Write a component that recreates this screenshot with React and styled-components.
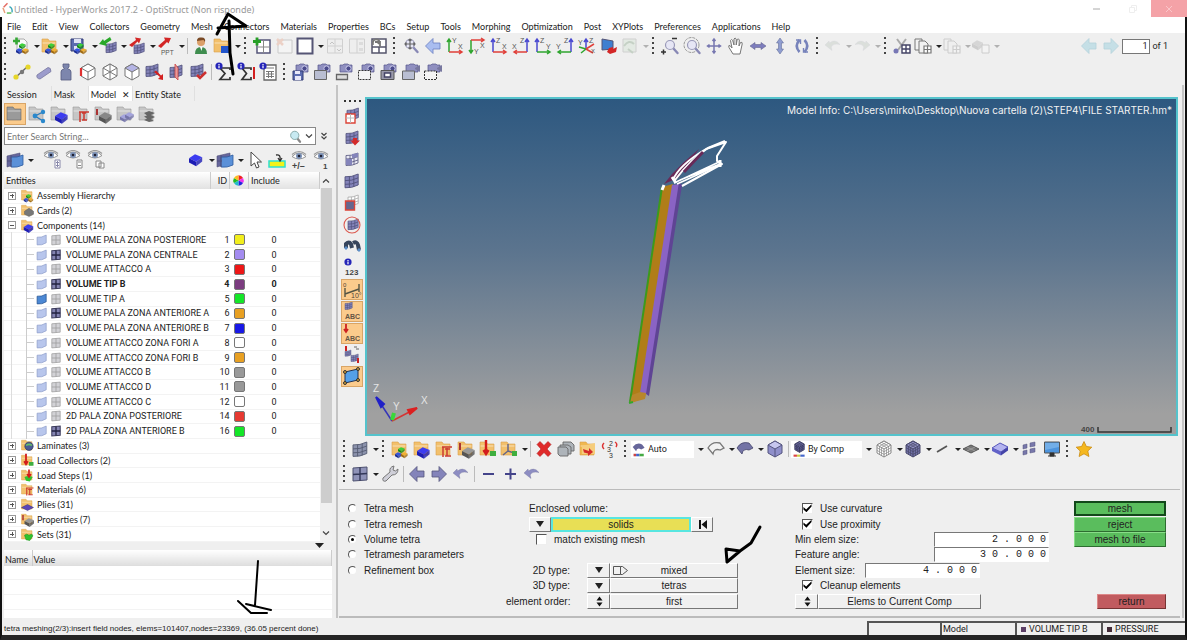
import React, { useState } from 'react';
import styled, { createGlobalStyle } from 'styled-components';

const GlobalStyle = createGlobalStyle`
	* { box-sizing : border-box; }
	body {
		margin : 0;
		background : #efefef;
		color : #222;
		font-family : Roboto, "Liberation Sans", sans-serif;
		font-size : 9px;
	}
	button, input, select {
		font : inherit;
		color : inherit;
		margin : 0;
		padding : 0;
		border : 0;
		border-radius : 0;
		background : none;
	}
`

/* ---------- drawing pieces ---------- */

const P = '#8484ba';
const D = '#50507a';

const Folder = ({ fill = '#f2c06c', edge = '#d9a04a' }) => (
	<g>
		<path d="M2 3h6l1.5 2H16v11H2z" fill={fill} stroke={edge} strokeWidth=".6" />
		<path d="M2.5 7h13" stroke="#fff" strokeOpacity=".5" />
	</g>
);

const Block = ({ x = 0, y = 0, s = 1, c = '#3c3cf0', side = '#1c1cb4' }) => (
	<g transform={`translate(${x} ${y}) scale(${s})`}>
		<path d="M0 3.5l5-3.2 6 2.4-5 3.8z" fill={c} />
		<path d="M0 3.5l6 3v3.8l-6-3.3z" fill={side} />
		<path d="M6 6.5l5-3.8v3.6l-5 4z" fill={side} fillOpacity=".8" />
	</g>
);

const Cubes = ({ x = 6, y = 8 }) => (
	<g>
		<Block x={x + 2} y={y - 1} s={.6} c="#3ad13a" side="#168a16" />
		<Block x={x - 1} y={y + 4} s={.6} c="#3355e0" side="#1a2d96" />
		<Block x={x + 5} y={y + 4} s={.6} c="#f0b030" side="#a06a10" />
	</g>
);

const Mesh = ({ x = 3, y = 3, s = 1, c = P, line = D }) => (
	<g transform={`translate(${x} ${y}) scale(${s})`}>
		<path d="M0 2.5Q6 3 12 0v10Q6 13 0 12.5z" fill={c} stroke={line} strokeWidth=".8" />
		<path d="M0 6Q6 6.4 12 3.5M0 9.4Q6 9.8 12 7M4 2.4v10.1M8 1.7v10" fill="none" stroke={line} strokeWidth=".8" />
	</g>
);

const IsoCube = ({ fill = '#fff', top = '#fff', line = '#777', grid }) => (
	<g stroke={line} strokeWidth="1" strokeLinejoin="round">
		<path d="M3 6l7-4 7 4v8l-7 4-7-4z" fill={fill} />
		<path d="M3 6l7-4 7 4-7 4z" fill={top} />
		<path d="M10 10v8" />
		{grid && <path d="M5.500 4.500l7 4v8M7.500 3.300l7 4v8M14.500 4.500l-7 4v8M12.500 3.300l-7 4v8M3 8.700l7 4 7-4M3 11.400l7 4 7-4" fill="none" strokeWidth=".7" />}
	</g>
);

const Camera = ({ video, children }) => (
	<g>
		<path d="M5 3h3l1-1h4l1 1h3v7H5z" fill="#8f8fc0" stroke="#55558a" strokeWidth=".7" />
		{video ? <path d="M14 6l5-3v7l-5-3z" fill="#77779f" /> : <circle cx="13.500" cy="6.500" r="2.600" fill="#4b4b8c" stroke="#c9c9ea" />}
		{children}
	</g>
);

const Eye = ({ x = 0, y = 0 }) => (
	<g transform={`translate(${x} ${y})`}>
		<path d="M1 5.500Q8 -1.500 15 5.500Q8 10.500 1 5.500z" fill="#fff" stroke="#888" strokeWidth=".9" />
		<path d="M1 3.500Q8 -2.500 15 3.500" fill="none" stroke="#999" strokeWidth="1.200" />
		<circle cx="8" cy="5" r="3" fill="#7d93b8" />
		<circle cx="8" cy="5" r="1.300" fill="#223" />
	</g>
);

const Lens = ({ x = 11, y = 9 }) => (
	<g>
		<path d={`M${x + 3} ${y + 3}l4.500 5`} stroke="#8888b5" strokeWidth="2.400" strokeLinecap="round" />
		<circle cx={x} cy={y} r="4.500" fill="#e6e6f5" stroke="#9a9ab8" strokeWidth="1.200" />
	</g>
);

const Axes = ({ a, b, ca, cb, flip, down }) => {
	const x = flip ? 16 : 4;
	const e = flip ? 3 : 17;
	const y = down ? 4 : 16;
	const t = down ? 17 : 3;
	const k = down ? -3 : 3;
	const m = flip ? 3 : -3;
	return (
		<g>
			<path d={`M${x} ${y}V${t}M${x - 2} ${t + k}L${x} ${t}l2 ${k}`} fill="none" stroke={ca} strokeWidth="1.500" />
			<path d={`M${x} ${y}H${e}M${e + m} ${y - 2}L${e} ${y}l${m} 2`} fill="none" stroke={cb} strokeWidth="1.500" />
			<text x={flip ? 9 : 7} y={down ? 18 : 7} fontSize="7" fill="#555">{a}</text>
			<text x={flip ? 1 : 13} y={down ? 12 : 13} fontSize="7" fill="#555">{b}</text>
		</g>
	);
};

const Info = ({ x = 5, y = 4 }) => (
	<g>
		<circle cx={x} cy={y} r="3.600" fill="#2525b8" />
		<path d={`M${x} ${y - 2}v1M${x} ${y - .4}v2.600`} stroke="#fff" strokeWidth="1.200" />
	</g>
);

const Curl = ({ c = '#8d8dc2', flip }) => (
	<path transform={flip ? 'matrix(-1 0 0 1 20 0)' : undefined} d="M2 9l7 5.500-.8-3.500Q10 7 17 8.500Q12 2.500 6.500 7L6 5z" fill={c} stroke="#66668e" strokeOpacity=".5" strokeWidth=".6" />
);

const Arrow = ({ left, c = P, line = '#55557c' }) => (
	<path transform={left ? 'matrix(-1 0 0 1 20 0)' : undefined} d="M3 7h7V2.500l7.500 7.500-7.500 7.500V13H3z" fill={c} stroke={line} strokeWidth=".8" />
);

const Pages = ({ c = '#777' }) => (
	<g fill="#f2f2f2" stroke={c}>
		<path d="M2 3h7v11H2z" />
		<path d="M6 5h6l3 3v9H6z" />
		<path d="M11 10h7v7h-7zM14.500 10v7M11 13.500h7" fill="#fff" stroke={c} strokeWidth="1.200" />
	</g>
);

const icons = {
	fresh: <g><path d="M6 3h7l3 3v10H6z" fill="#fafafa" stroke="#aaa" /><path d="M2 5h7M5.500 1.500v7" stroke="#36a836" strokeWidth="2.600" /><Cubes /></g>,
	open: <g><Folder /><Cubes /></g>,
	save: <g><path d="M2 3h12v12H2z" fill="#5c6cb0" stroke="#333d77" /><path d="M5 3h7v4H5zM5 10h6v5H5z" fill="#dfe3f5" /><Cubes /></g>,
	bring: <g><Mesh x={8} y={6} s={.85} /><path d="M1 8l4-5 1 2 6-4 1.500 3L8 7.500l1 2.500z" fill="#28a828" /></g>,
	send: <g><Mesh x={7} y={7} s={.85} /><path d="M2 9l7-5-1-2.500 6 1-2 5-1.500-2L5 11z" fill="#d32626" /></g>,
	ppt: <g><path d="M2 10l7-6-1-2.500 7 .5-2.500 5.500L11 6l-6 6z" fill="#d32626" /><text x="5" y="19" fontSize="6.500" fill="#555">PPT</text></g>,
	user: <g><circle cx="10" cy="6" r="4" fill="#dba06a" /><path d="M6 5Q6 1 10 1.500Q15 1 14 6L12.500 4Q9 4.500 6 5z" fill="#7a4a26" /><path d="M4 18Q4 11 10 11T16 18z" fill="#3f8d4f" /><path d="M9 11l1.500 4 1-4z" fill="#fff" /></g>,
	profile: <g><Folder /><path d="M9 10h8v7H9z" fill="#2255cc" /></g>,
	pageAdd: <g><path d="M5 4h13v13H5z" fill="#fff" stroke="#55557a" strokeWidth="1.500" /><path d="M11.500 4v13M5 11h13" stroke="#888" /><path d="M1 5.500h8M5 1.500v8" stroke="#279f27" strokeWidth="2.800" /></g>,
	pageDel: <g opacity=".35"><path d="M4 4h14v13H4z" fill="#fff" stroke="#888" /><path d="M3 3l6 6M9 3L3 9" stroke="#e79a7c" strokeWidth="2.500" /></g>,
	frame: <path d="M2.500 2.500h15v15h-15z" fill="#fff" stroke="#555575" strokeWidth="2" />,
	frameA: <g opacity=".35"><path d="M2.500 3h15v14h-15zM10 3v14M3 10h14" fill="#eee" stroke="#999" /><path d="M5 8l2-2 2 2M12 13l2 2 2-2" fill="none" stroke="#777" /></g>,
	frameB: <g opacity=".35"><path d="M2.500 3h15v14h-15zM10 3v14" fill="#eee" stroke="#999" /><path d="M12 6h4v3h-4zM12 12h4v3h-4z" fill="#bbb" /></g>,
	turn: <g><path d="M3 3h14v14H3zM3 11h14M10 11v6" fill="#fff" stroke="#55556c" strokeWidth="1.500" /><path d="M4 9Q3 3 8 3.500Q12 4 9 8M6 6h5v5" fill="none" stroke="#777" strokeWidth="1.800" /></g>,
	fit: <g><Lens x={9} y={8} /><path d="M4 8h10M9 3v10M7.500 4.500L9 3l1.500 1.500M7.500 11.500L9 13l1.500-1.500M5.500 6.500L4 8l1.500 1.500M12.500 6.500L14 8l-1.500 1.500" fill="none" stroke="#666" strokeWidth="1.200" /></g>,
	back: <Arrow left c="#a9bdf0" line="#6b7fc0" />,
	xy: <Axes a="Y" b="X" ca="#2fa52f" cb="#e0403a" />,
	yx: <Axes a="Y" b="X" ca="#2fa52f" cb="#e0403a" down />,
	zx: <Axes a="Z" b="X" ca="#4a4ad0" cb="#e0403a" />,
	xz: <Axes a="Z" b="X" ca="#4a4ad0" cb="#e0403a" flip />,
	zy: <Axes a="Z" b="Y" ca="#4a4ad0" cb="#2fa52f" />,
	yz: <Axes a="Z" b="Y" ca="#4a4ad0" cb="#2fa52f" flip />,
	iso: <g fill="none" strokeWidth="1.500"><path d="M9 13V3M7 6l2-3 2 3" stroke="#4a4ad0" /><path d="M9 13l-7-2M9 13l-5 4" stroke="#2fa52f" /><path d="M9 13l8-5M9 13l7 4" stroke="#e0403a" /><text x="1" y="9" fontSize="7" fill="#555">Y</text><text x="12" y="7" fontSize="7" fill="#555">Z</text><text x="14" y="17" fontSize="6" fill="#555">X</text></g>,
	views: <g><path d="M3 3l11 2v8L3 14z" fill="#3f7fd0" stroke="#557" /><path d="M10 12l4-1v2l4-2-1 5-6 2-3-2z" fill="#d32626" /></g>,
	ghost: <g opacity=".35"><path d="M3 3h13v13H3z" fill="#cfe2cf" stroke="#999" /><path d="M4 10Q9 3 14 8M8 13l5 4" fill="none" stroke="#7a9c7a" strokeWidth="2" /></g>,
	zoomBox: <g><Lens x={10} y={9} /><path d="M12 2.500h5M1 16h5M3.500 13.500v5" stroke="#333" strokeWidth="1.500" /></g>,
	zoomRing: <g><circle cx="9.500" cy="9" r="7.500" fill="none" stroke="#999" strokeDasharray="3 1" /><Lens x={10} y={9} /></g>,
	pan: <path d="M10 3v14M3.500 10h13M8.500 5L10 3l1.500 2M8.500 15l1.500 2 1.500-2M5.500 8.500l-2 1.500 2 1.500M14.500 8.500l2 1.500-2 1.500" fill="none" stroke="#7777b0" strokeWidth="1.500" />,
	hand: <path d="M7 18L3 11.500Q2 9 4 9.500L6 12 4.500 4.500Q5.500 2.500 6.700 4.500L8 9V3Q9 1 10.200 3v6l1-5.500Q12.500 2 13.300 4L13 10l1.500-3.500Q16.500 5.500 16.200 8L14 18z" fill="#fff" stroke="#777" strokeWidth="1" />,
	horiz: <path d="M2 10l5-3.500v2h6v-2l5 3.500-5 3.500v-2H7v2z" fill="#7d7dbd" stroke="#666690" strokeWidth=".6" />,
	vert: <path d="M10 2l3.500 5h-2v6h2L10 18l-3.500-5h2V7h-2z" fill="#8f9dd0" stroke="#66709c" strokeWidth=".6" />,
	spin: <g fill="none" stroke="#7783bb" strokeWidth="2.600"><path d="M7.500 4Q2 10 7.500 16M12.500 4Q18 10 12.500 16" /><path d="M4 4h4.500v4M16 16h-4.500v-4" strokeWidth="1.400" /></g>,
	undoOff: <g opacity=".22"><Curl c="#9a9" /></g>,
	redoOff: <g opacity=".22"><Curl c="#9a9" flip /></g>,
	cut: <g><path d="M5 3l8 11M14 3L6 14" stroke="#aaa" strokeWidth="2" /><circle cx="4" cy="15" r="2.500" fill="#7777b5" /><path d="M10 9h8v8h-8zM14 9v8M10 13h8" fill="#fff" stroke="#444466" strokeWidth="1.400" /></g>,
	copy: <Pages />,
	paste: <g opacity=".28"><Pages /></g>,
	wipe: <g opacity=".28"><Block x={1} y={4} c="#999" side="#777" /><path d="M11 9h7v8h-7z" fill="#fff" stroke="#777" /></g>,
	prev: <Arrow left c="#c5dfe6" line="#b4d2da" />,
	next: <Arrow c="#c5dfe6" line="#b4d2da" />,

	nodes: <g><path d="M4 15L15 5" stroke="#666" strokeWidth="1.400" /><circle cx="4" cy="15" r="2.600" fill="#e6d62a" /><circle cx="10" cy="10" r="2.200" fill="#777" /><circle cx="16" cy="5" r="2.600" fill="#e6d62a" /></g>,
	rod: <path d="M3 13L14 5.500q3 0 3 4L6 17q-4-.5-3-4z" fill="#9c9ccc" stroke="#7777a0" strokeWidth=".8" />,
	mass: <path d="M7 2h6v3l-1.500 1.500Q15.500 8 15 10v8H5v-8Q4.500 8 8.500 6.500L7 5z" fill="#7d86ad" stroke="#555c80" strokeWidth=".8" />,
	cubeRed: <g><IsoCube /><path d="M3 6v8" stroke="#e03030" strokeWidth="2.200" /></g>,
	cubeX: <g fill="none"><IsoCube /><path d="M3 14l7-4 7 4M10 2v8" stroke="#777" /></g>,
	cubeTop: <IsoCube top="#b4b4e4" />,
	meshOut: <g><Mesh x={2} y={2} /><path d="M10 10l6 5-2 2 5 1V12l-2 1.500-5-5z" fill="#d32020" /></g>,
	meshFlip: <g><Mesh x={4} y={3} /><path d="M9 2l3 4v12l-3-3z" fill="#e89a9a" stroke="#c44" strokeWidth=".8" /></g>,
	meshOk: <g><Mesh x={3} y={2} /><path d="M9 13l3 3 6-6" fill="none" stroke="#cc3030" strokeWidth="2.500" /></g>,
	sum: <g><path d="M15 8V6H5l5 5.500-5 6h10v-2.500" fill="none" stroke="#333" strokeWidth="1.700" /><Info x={4} /></g>,
	sumLoad: <g><path d="M14 8V6H5l4.500 5.500-4.500 6h9v-2.500" fill="none" stroke="#333" strokeWidth="1.700" /><Info x={4} /><path d="M17 5v12" stroke="#d32020" strokeWidth="2" /></g>,
	calc: <g><path d="M5 3h12v15H5z" fill="#fff" stroke="#666" strokeWidth="1.300" /><path d="M7 6h8M7 9.500h8M7 12h8M7 14.500h8M9.500 9v7M12.500 9v7" stroke="#777" /><Info x={4} /></g>,
	camSave: <Camera><path d="M2 9h10v9H2z" fill="#5c6cb0" stroke="#333d77" /><path d="M4 9h5v3H4zM4 14h6v4H4z" fill="#e8e8f8" /></Camera>,
	camWin: <Camera><path d="M1.500 8.500h12v9h-12z" fill="#b9bed2" stroke="#666" /></Camera>,
	camBar: <Camera><path d="M1.500 12.500h11v5h-11z" fill="#ddd" stroke="#666" strokeWidth="1.300" /></Camera>,
	camDash: <Camera><path d="M1.500 8.500h12v9h-12z" fill="#f4f4f4" stroke="#333" strokeDasharray="2 1" /></Camera>,
	camFrame: <Camera><path d="M2 8.500h13v9H2z" fill="#99a" stroke="#555" /><path d="M5.500 11h6v4h-6z" fill="#fff" stroke="#446" strokeWidth="1.500" /></Camera>,
	vidWin: <Camera video><path d="M1.500 9h12v8.500h-12z" fill="#b9bed2" stroke="#666" /></Camera>,
	vidDash: <Camera video><path d="M1.500 9h12v8.500h-12z" fill="#f4f4f4" stroke="#333" strokeDasharray="2 1" /></Camera>,

	fGrey: <Folder fill="#9a9a9a" edge="#666" />,
	fLink: <g><Folder fill="#c6c6c6" edge="#999" /><path d="M8 12l8-4M8 12l8 5" stroke="#2a78b8" strokeWidth="1.300" /><circle cx="8" cy="12" r="2.400" fill="#2a88cc" /><circle cx="16" cy="8" r="2.200" fill="#2a88cc" /><circle cx="16" cy="17" r="2.200" fill="#2a88cc" /></g>,
	fBlue: <g><Folder fill="#c6c6c6" edge="#999" /><Block x={6} y={8} s={1.150} /></g>,
	fMat: <g><Folder fill="#c6c6c6" edge="#999" /><path d="M8 8h10M9 8v10M13 9v7M11 9h4M11 16h5" stroke="#cc3a30" strokeWidth="1.500" /></g>,
	fProp: <g><Folder fill="#c6c6c6" edge="#999" /><Block x={6} y={8} s={1.150} c="#888" side="#555" /><path d="M4 5v6" stroke="#a33" strokeWidth="2" /></g>,
	fRefs: <g><Folder fill="#c6c6c6" edge="#999" /><Block x={5} y={10} s={.8} c="#a4a4dd" side="#7474aa" /><Block x={10} y={8} s={.8} c="#a4a4dd" side="#7474aa" /></g>,
	fStack: <g><Folder fill="#c6c6c6" edge="#999" /><path d="M7 9l5-2 6 2-4 2 4 2-4 2 3 2-5 1-5-2 3-1.500-3-2 3-1z" fill="#666" /></g>,
	patch: <g><path d="M2 6l13-3v10L2 17z" fill="#66669c" stroke={D} strokeWidth=".6" /><path d="M6 7q6 1 12-2v10q-6 3-12 2z" fill="#5a90d8" stroke="#2d5c9f" strokeWidth=".8" /><path d="M2 11h5M6 5v12" stroke={D} /></g>,
	eyePlus: <g><Eye /><path d="M12 10h5v8h-5zM14.500 11v6M13 12.500h3M13 15.500h3" fill="#fff" stroke="#88a" /></g>,
	eyeMinus: <g><Eye /><path d="M12 10h5v8h-5zM13 12h3M13 15.500h3" fill="#fff" stroke="#888" /></g>,
	eyeFlip: <g><Eye /><path d="M9 11h5v6H9zM12 13h5v5h-5z" fill="#fff" stroke="#888" /></g>,
	block: <Block x={3} y={4} s={1.200} />,
	cursor: <path d="M6 2v14l3.500-3 2 5 2.500-1-2-5h4.500z" fill="#fff" stroke="#444" />,
	addTo: <g><path d="M2 11h16v6H2z" fill="#f2f21a" stroke="#2ee0d0" strokeWidth="1.500" /><path d="M9 5q5-1 4 5M11 8l2 3 2-3" fill="none" stroke="#333" strokeWidth="1.300" /></g>,
	eyeAll: <g><Eye x={2} y={1} /><text x="3" y="19" fontSize="9" fontWeight="700" fill="#444">+/–</text></g>,
	eyeOne: <g><Eye x={2} y={1} /><text x="12" y="19" fontSize="8" fontWeight="700" fill="#444">1</text></g>,

	vMask: <g><Mesh x={5} y={2} s={.95} /><path d="M4 8h9v9H4z" fill="#fff" stroke="#dc4438" strokeWidth="1.400" /><path d="M4 12h9M8.500 8v9" stroke="#bbb" /></g>,
	vDown: <g><Mesh x={4} y={3} /><path d="M11 10h4v2.500h3L13 17.500 8.500 12.500H11z" fill="#d42a2a" /></g>,
	vHalf: <g><Mesh x={4} y={3} c="#e8e8f4" /><path d="M4 9h6v6H4zM10 4l6-1v4l-6 1z" fill={P} /></g>,
	vFull: <Mesh x={3} y={3} s={1.100} />,
	vWire: <g><Mesh x={6} y={2} s={.85} c="#fff" line="#999" /><path d="M3.500 8h9v9h-9z" fill="#66668e" stroke="#dc4438" strokeWidth="1.400" /></g>,
	vCircle: <g><Mesh x={6} y={4} s={.85} /><circle cx="10" cy="10" r="8" fill="none" stroke="#dc5a50" strokeWidth="1.100" /></g>,
	find: <g fill="none" stroke="#36455c" strokeWidth="4"><path d="M4 12V8q3-3 5 0l1 4" /><path d="M11 7q4-2 5 2l1 5" /><circle cx="4" cy="12" r="1.200" fill="#5c8fc8" stroke="#5c8fc8" strokeWidth="1" /><circle cx="17" cy="14" r="1.200" fill="#5c8fc8" stroke="#5c8fc8" strokeWidth="1" /></g>,
	numbers: <g><Info x={6} y={4} /><text x="3" y="17" fontSize="8" fontWeight="700" fill="#444">123</text></g>,
	measure: <g stroke="#554"><path d="M3 8v9M3 14l14-5M17 4v8" fill="none" strokeWidth="1.400" /><text x="1" y="7" fontSize="6" stroke="none" fill="#543">0</text><text x="9" y="18" fontSize="7" stroke="none" fill="#543">10°</text></g>,
	meshAbc: <g><Mesh x={3} y={1} s={.6} /><text x="3" y="18" fontSize="7" fontWeight="700" fill="#654">ABC</text></g>,
	loadAbc: <g><path d="M4 1v8M2 6l2 3 2-3" stroke="#c22" strokeWidth="1.800" fill="none" /><text x="3" y="18" fontSize="7" fontWeight="700" fill="#654">ABC</text></g>,
	loads: <g><Mesh x={3} y={5} s={.5} /><Mesh x={9} y={9} s={.6} /><path d="M4 1v5M16 13v5" stroke="#c22" strokeWidth="2" /><path d="M12 2h3M14 4h3" stroke="#666" /></g>,
	shade: <g><path d="M3 6l13-3v11L3 17z" fill="#55a0e8" stroke="#235" strokeWidth="1" /><circle cx="3" cy="6" r="1.500" fill="#c93" stroke="#333" /><circle cx="16" cy="3" r="1.500" fill="#c93" stroke="#333" /><circle cx="16" cy="14" r="1.500" fill="#c93" stroke="#333" /><circle cx="3" cy="17" r="1.500" fill="#c93" stroke="#333" /></g>,

	gMesh: <Mesh x={3} y={3} s={1.150} c="#8c93ad" line="#555b72" />,
	yCubes: <g><Folder /><Cubes y={9} /></g>,
	yBlue: <g><Folder /><Block x={5} y={8} s={1.150} /></g>,
	yMat: <g><Folder /><path d="M8 8h10M9 8v10M13 9v8M11 10h5M11 17h6" stroke="#cc3a30" strokeWidth="1.500" /></g>,
	yProp: <g><Folder /><Block x={6} y={8} s={1.150} c="#999" side="#555" /><path d="M4 4v7" stroke="#a33" strokeWidth="2" /></g>,
	yLoad: <g><Folder /><path d="M8 1v14M5.500 11L8 15l2.500-4" stroke="#d31c1c" strokeWidth="2.400" fill="none" /><path d="M12 12h6v5h-6z" fill="#3fae3f" /></g>,
	ySys: <g><Folder /><path d="M9 5v7M9 12l-5 4M9 12l6 2" stroke="#668" strokeWidth="1.500" /><path d="M13 12h5v5h-5z" fill="#3fae3f" /></g>,
	yGreen: <g><Folder /><path d="M6 11q3-3 6 0 5-3 5 1l-4 6-5-1z" fill="#2fc32f" stroke="#189018" strokeWidth=".7" /></g>,
	yStep: <g><Folder /><path d="M6 12q5-3 11 0l-4 6-5-1z" fill="#2fc32f" /><path d="M12 2v10M9.500 8l2.500 4 2.500-4" stroke="#d31c1c" strokeWidth="2.200" fill="none" /></g>,
	yPly: <g><Folder /><path d="M2 14l8-4 8 4-8 4z" fill="#5b46b8" stroke="#333077" strokeWidth=".6" /></g>,
	yBall: <g><Folder /><circle cx="12" cy="11" r="5.500" fill="#4a5a94" stroke="#2c365e" /><path d="M8 10q4-3 8 0" stroke="#68c068" strokeWidth="2" fill="none" /></g>,
	yCard: <g><Folder /><path d="M6 11l6-4 6 4v4l-6 3-6-3z" fill="#777" stroke="#555" strokeWidth=".6" /></g>,
	remove: <path d="M3 5.500l3-3 4 4 4-4 3 3-4 4.500 4 4.500-3 3-4-4-4 4-3-3L7 10z" fill="#e02a2a" stroke="#b01818" strokeWidth=".6" />,
	stack: <g fill="#aeb4ba" stroke="#666" strokeWidth=".9"><path d="M7 3h8l3 3v6H7z" /><path d="M4 6h8l3 2v7H4z" /><path d="M2 8h8l2 2v7H4l-2-2z" /></g>,
	organize: <g><Folder fill="#f0b850" /><path d="M17 4v11H4V7z" fill="#f6cd7c" /><path d="M5 10l6 2V9l4 4-5 4v-2.500l-4-1z" fill="#d42a2a" /></g>,
	renum: <g fontSize="7" fill="#333"><text x="9" y="7">2</text><text x="7" y="13">3</text><text x="9" y="19">3</text><path d="M4 4q-3 3 0 6M15 3q3 2 1 5" fill="none" stroke="#d33" strokeWidth="1.500" /></g>,
	surf: <path d="M2 9Q6 2 14 4L18 9l-4 2Q8 9 7 15z" fill="#7474a6" stroke="#44446a" strokeWidth=".8" />,
	surfLine: <path d="M2 9Q6 2 14 4L18 9l-4 2Q8 9 7 15z" fill="#f2f2f2" stroke="#777" strokeWidth="1.300" />,
	solid: <IsoCube fill="#8f8fca" top="#c6c6ee" line="#55557f" />,
	wireCube: <IsoCube grid line="#888" />,
	fillCube: <IsoCube grid fill="#7272a8" top="#9090c4" line="#4a4a6c" />,
	line: <path d="M5 13l10-6" stroke="#555" strokeWidth="1.800" />,
	shell: <g><path d="M2 10l8-4 8 4-8 4z" fill="#777" stroke="#555" /><path d="M6 8l8 4M14 8l-8 4" stroke="#aaa" strokeWidth=".7" /></g>,
	slab: <g><path d="M2 9l8-5 8 4-7 5z" fill="#b4b4f0" stroke="#5555bb" /><path d="M2 9l9 4v3.500L2 12z" fill="#6262c8" /><path d="M11 13l7-5v3.500l-7 5z" fill="#4444a8" /></g>,
	shrink: <g fill="#7777aa" stroke="#55557f" strokeWidth=".5"><path d="M3 6l4-1v4l-4 1zM10 4l5-1v4l-5 1zM3 12l4-1v4l-4 1zM10 10l5-1v4l-5 1z" /></g>,
	screen: <g><path d="M2.500 3h15v11h-15z" fill="#4d94dd" stroke="#555" /><path d="M3 4h14v4L3 11z" fill="#8cc0f0" fillOpacity=".6" /><path d="M8 14h4v3H8zM6 17h8" fill="#333" stroke="#333" /></g>,
	star: <path d="M10 2.500l2.400 5 5.400.7-4 3.800 1.100 5.500L10 14.800l-4.900 2.700L6.200 12l-4-3.800 5.400-.7z" fill="#f5b81f" stroke="#c98a10" strokeWidth=".8" />,
	meshFour: <g><path d="M3 4l14-1v13L3 17z" fill="#8f93b8" stroke="#4c506f" /><path d="M10 3.500v13M3 10.500l14-1" stroke="#333858" strokeWidth="1.400" /></g>,
	wrench: <path d="M3 14l7-6Q9 3 14 2l-1 4 2.500 1L18 5q0 6-6 6l-6 6q-4 1-3-3z" fill="#cfcfd8" stroke="#777" strokeWidth="1" />,
	left: <Arrow left />,
	right: <Arrow />,
	curl: <Curl />,
	minus: <path d="M5 10h11" stroke="#44448a" strokeWidth="2" />,
	plus: <path d="M5 10h11M10.500 4.500v11" stroke="#44448a" strokeWidth="2" />,
	palette: <g><path d="M2 7Q7 1 13 4l3 4-4 2Q7 7 6 12z" fill="#66669a" /><path d="M3 15h3v3H3z" fill="#c44" /><path d="M6 15h4v3H6z" fill="#46c" /><path d="M10 15h5v3h-5z" fill="#4a4" /></g>,
	compCube: <g><g transform="translate(2 -1) scale(.8)"><IsoCube grid fill="#66669c" top="#7a7ab0" line="#2f2f50" /></g><path d="M3 16h4v2.500H3z" fill="#d44" /><path d="M7 16h4v2.500H7z" fill="#cc4" /><path d="M11 16h5v2.500h-5z" fill="#46c" /></g>,
	lens: <g><path d="M12 12l4 5" stroke="#888" strokeWidth="3" strokeLinecap="round" /><circle cx="9" cy="8.500" r="5.500" fill="#c8eaf2" stroke="#8aa" strokeWidth="1.300" /></g>,
	wheel: <g><path d="M10 10V2a8 8 0 0 1 7 4z" fill="#e22" /><path d="M10 10l7-4a8 8 0 0 1 0 8z" fill="#e3e" /><path d="M10 10l7 4a8 8 0 0 1-7 4z" fill="#22d" /><path d="M10 10v8a8 8 0 0 1-7-4z" fill="#2bc" /><path d="M10 10l-7 4a8 8 0 0 1 0-8z" fill="#2b2" /><path d="M10 10L3 6a8 8 0 0 1 7-4z" fill="#fb2" /></g>,
	geoOff: <path d="M3 6q6 1 13-3v11q-6 4-13 3z" fill="#b8c6ec" stroke="#8c9cc9" />,
	geoOn: <path d="M3 6q6 1 13-3v11q-6 4-13 3z" fill="#4c88d4" stroke="#24508c" />,
	elOff: <g><path d="M4 4l12-1v13l-12 1z" fill="#d2d2d6" stroke="#999" /><path d="M10 3.500v13M4 10h12" stroke="#999" /></g>,
	elOn: <g><path d="M4 4l12-1v13l-12 1z" fill="#8484b2" stroke="#3c3c5c" strokeWidth="1.500" /><path d="M10 3.500v13M4 10h12" stroke="#222240" strokeWidth="1.800" /></g>,
	logo: <g fill="none" strokeWidth="2.200"><path d="M10 2L4 8" stroke="#e46a62" /><path d="M3 9l3 8" stroke="#e9a07c" /><path d="M13 7q5 2 4 9" stroke="#3aa6b8" /><path d="M9 17h7" stroke="#58b858" /></g>,
};

const Svg = styled.svg`
	display : block;
	flex : none;
	width : ${p => p.$size || 20}px;
	height : ${p => p.$size || 20}px;
	font-family : "Liberation Sans", sans-serif;
`

const Icon = ({ name, size }) => <Svg viewBox="0 0 20 20" $size={size} aria-hidden="true">{icons[name]}</Svg>;

/* ---------- frame ---------- */

const Page = styled.div`
	position : relative;
	display : flex;
	flex-direction : column;
	min-height : 100vh;
`

const TitleBar = styled.header`
	display : flex;
	align-items : center;
	height : 17px;
	padding-left : 1px;
	background : #fff;
	color : #999;
	font-family : "Noto Sans", sans-serif;
`

const TitleText = styled.h1`
	flex : 1;
	margin : 2px 0 0;
	font-size : 9px;
	font-weight : 400;
`

const WinButton = styled.button`
	width : 36px;
	height : 17px;
	display : grid;
	place-items : center;
	background : ${p => p.$close ? '#f4a2a7' : 'none'};
`

const Frame = styled.div`
	flex : 1;
	display : flex;
	flex-direction : column;
	border-left : 2px solid #111;
	border-right : 2px solid #111;
	border-bottom : 5px solid #252525;
`

const MenuBar = styled.nav`
	display : flex;
	align-items : center;
	gap : 11px;
	height : 16px;
	padding : 3px 5px 0;
	background : #fff;
	font-family : Lato, "Noto Sans", sans-serif;
`

const Toolbar = styled.div`
	display : flex;
	align-items : center;
	height : ${p => p.$h || 26}px;
	padding-left : ${p => p.$pad || 0}px;
`

const Tool = styled.button`
	display : flex;
	align-items : center;
	justify-content : center;
	flex : none;
	width : ${p => p.$wide ? 29 : 22}px;
	height : 22px;
	gap : 3px;
	background : ${p => p.$on ? '#fbcb8c' : 'none'};
	outline : ${p => p.$on ? '1px solid #d9a566' : 'none'};
	outline-offset : -1px;
`

const Caret = styled.span`
	flex : none;
	border : ${p => p.$big ? 4 : 3}px solid transparent;
	border-top : ${p => p.$big ? 6 : 3}px solid #222;
	border-bottom : 0;
	opacity : ${p => p.$dim ? .3 : 1};
`

const Grip = styled.span`
	flex : none;
	width : 2px;
	height : 18px;
	margin : 0 5px 0 3px;
	background : repeating-linear-gradient(#444 0 2px, transparent 2px 5px);
	&:first-child { margin-left : ${p => p.$in || 0}px; }
`

const Sep = styled.span`
	flex : none;
	width : 1px;
	height : 16px;
	margin : 0 2px;
	background : #bbb;
`

const Spacer = styled.span`
	flex : ${p => p.$w ? `0 0 ${p.$w}px` : 1};
`

const PageBox = styled.label`
	display : flex;
	align-items : center;
	gap : 2px;
	padding-right : 17px;
	input {
		width : 28px;
		height : 15px;
		padding-right : 2px;
		background : #fff;
		border : 1px solid #777;
		text-align : right;
	}
`

const Body = styled.main`
	flex : 1;
	display : flex;
`

/* ---------- browser panel ---------- */

const Browser = styled.aside`
	display : flex;
	flex-direction : column;
	width : 336px;
	flex : none;
	padding-right : 4px;
	border-right : 2px solid #c4c4c4;
	font-family : Lato, Roboto, sans-serif;
`

const Tabs = styled.div`
	display : flex;
	height : 16px;
	padding-top : 1px;
`

const Tab = styled.button`
	display : flex;
	align-items : center;
	gap : 6px;
	padding : 2px ${p => p.$end || 2}px 0 ${p => p.$start || 2}px;
	background : ${p => p.$active ? '#fff' : 'none'};
	border-right : 1px solid #e0e0e0;
`

const Search = styled.div`
	display : flex;
	align-items : center;
	margin : 0 0 3px 2px;
	padding-right : 4px;
	gap : 4px;
`

const SearchBox = styled.label`
	flex : 1;
	display : flex;
	align-items : center;
	gap : 2px;
	height : 18px;
	padding-right : 2px;
	background : #fff;
	border : 1px solid #888;
	input {
		flex : 1;
		min-width : 0;
		padding-left : 2px;
		outline : 0;
	}
	input::placeholder { color : #777; opacity : 1; }
`

const TreeArea = styled.div`
	flex : 1;
	display : flex;
	margin-left : 2px;
	background : #fff;
`

const TreeTable = styled.table`
	flex : 1;
	border-collapse : collapse;
	table-layout : fixed;
	th {
		height : 17px;
		padding : 0 2px;
		font-weight : 400;
		text-align : left;
		background : linear-gradient(#fff, #e2e2e2);
		border-right : 1px solid #ccc;
	}
	th:nth-child(2) { text-align : right; }
	td {
		padding : 0;
		border-bottom : 1px solid #f3f3f3;
	}
`

const Col = styled.col`
	width : ${p => p.$w ? p.$w + 'px' : 'auto'};
`

const Item = styled.div`
	display : flex;
	align-items : center;
	height : 13px;
	white-space : nowrap;
	font-family : ${p => p.$leaf ? 'Roboto, sans-serif' : 'inherit'};
	font-weight : ${p => p.$bold ? 700 : 400};
	padding-left : 2px;
`

const Expander = styled.button`
	width : 8px;
	height : 8px;
	margin : 0 4px 0 2px;
	flex : none;
	border : 1px solid #999;
	background :
		linear-gradient(#555, #555) center / 4px 1px no-repeat,
		linear-gradient(#555, #555) center / ${p => p.$open ? '0 0' : '1px 4px'} no-repeat,
		#fff;
`

const Branch = styled.span`
	flex : none;
	width : 29px;
	height : 15px;
	background :
		linear-gradient(#ddd, #ddd) 5px 0 / 1px 100% no-repeat,
		linear-gradient(#ccc, #ccc) 20px 0 / 1px 100% no-repeat,
		linear-gradient(#ccc, #ccc) 20px 7px / 8px 1px no-repeat;
`

const Name = styled.span`
	margin-left : ${p => p.$gap || 2}px;
`

const Num = styled.td`
	text-align : ${p => p.$center ? 'center' : 'right'};
	font-weight : ${p => p.$bold ? 700 : 400};
	font-family : Roboto, sans-serif;
	&:last-child { padding-right : 20px; }
`

const Swatch = styled.span`
	display : block;
	width : 11px;
	height : 11px;
	margin : 0 auto;
	background : ${p => p.$c};
	border : 1px solid #777;
	border-radius : 2px;
`

const Scroll = styled.div`
	display : flex;
	flex-direction : column;
	align-items : center;
	width : 12px;
	padding : 5px 0;
	background : #f0f0f0;
`

const Thumb = styled.div`
	width : 11px;
	flex : 1;
	margin : 3px 0 26px;
	background : #cdcdcd;
`

const Splitter = styled.div`
	display : flex;
	justify-content : flex-end;
	padding : 1px 8px 2px;
`

const Detail = styled.table`
	margin-left : 2px;
	border-collapse : collapse;
	background : repeating-linear-gradient(#fff 0 14px, #f3f3f3 14px 15px);
	th {
		height : 16px;
		padding : 2px 2px 0 1px;
		font-weight : 400;
		text-align : left;
		background : linear-gradient(#fff, #ddd);
		border-right : 1px solid #ccc;
	}
	td { height : 52px; }
`

/* ---------- graphics area ---------- */

const Work = styled.section`
	flex : 1;
	display : flex;
	flex-direction : column;
	min-width : 0;
	margin-right : 1px;
	border-right : 2px solid #c4c4c4;
`

const Stage = styled.div`
	flex : 1;
	display : flex;
	padding : 12px 4px 0 3px;
`

const SideBar = styled.div`
	display : flex;
	flex-direction : column;
	justify-content : space-between;
	padding-bottom : 49px;
	width : 24px;
	button { height : 21px; }
`

const SideGrip = styled.span`
	width : 18px;
	height : 2px;
	margin : 3px 0 3px 3px;
	background : repeating-linear-gradient(90deg, #333 0 2px, transparent 2px 5px);
`

const View = styled.div`
	position : relative;
	flex : 1;
	border : 2px solid #55c3cc;
	background : linear-gradient(#2d5880, #5b748e 45%, #a0a0a0 94%);
`

const Scene = styled.svg`
	position : absolute;
	inset : 0;
	width : 100%;
	height : 100%;
	font-family : "Liberation Sans", sans-serif;
`

const ModelInfo = styled.p`
	position : absolute;
	top : 5px;
	right : 4px;
	margin : 0;
	color : #f2f2f2;
	font-family : Inter, "Liberation Sans", sans-serif;
	font-size : 10px;
`

const Combo = styled.label`
	display : flex;
	align-items : center;
	height : 17px;
	background : #fff;
	select {
		appearance : none;
		width : ${p => p.$w}px;
		outline : 0;
	}
`

const ComboEnd = styled.i`
	display : flex;
	align-items : center;
	height : 17px;
	width : 12px;
	padding-left : 4px;
	background : #efefef;
`

/* ---------- tetramesh panel ---------- */

const Panel = styled.form`
	display : grid;
	grid-template-columns : 158px 289px 1fr auto;
	margin : 3px 2px 0 1px;
	padding : 11px 14px 7px 9px;
	border-top : 1px solid #bbb;
	border-bottom : 2px solid #bbb;
	font-family : "Liberation Sans", sans-serif;
	font-size : 10px;
`

const Rows = styled.div`
	display : grid;
	grid-template-rows : repeat(7, 1fr);
	align-items : center;
	min-height : 108px;
`

const Line = styled.div`
	display : flex;
	align-items : center;
	white-space : nowrap;
	padding-left : ${p => p.$in || 0}px;
	justify-content : ${p => p.$right ? 'flex-end' : 'flex-start'};
`

const Choice = styled.label`
	display : flex;
	align-items : center;
	gap : 7px;
`

const Radio = styled.input`
	appearance : none;
	display : grid;
	place-items : center;
	width : 9px;
	height : 9px;
	border : 1px solid;
	border-color : #555 #eee #eee #555;
	border-radius : 50%;
	background : #fff;
	&:checked::before {
		content : "";
		width : 3px;
		height : 3px;
		border-radius : 50%;
		background : #000;
	}
`

const Check = styled.input`
	appearance : none;
	width : 11px;
	height : 11px;
	border : 1px solid;
	border-color : #555 #eee #eee #555;
	background : #fff;
	&:checked::before {
		content : "";
		display : block;
		width : 9px;
		height : 8px;
		background : #000;
		clip-path : polygon(5% 35%, 35% 65%, 95% 0, 95% 30%, 38% 100%, 5% 65%);
	}
`

const Text = styled.span`
	width : ${p => p.$w ? p.$w + 'px' : 'auto'};
	padding-right : ${p => p.$w ? p.$pr || 0 : 0}px;
	text-align : ${p => p.$pr ? 'right' : 'left'};
`

const Push = styled.button`
	display : flex;
	align-items : center;
	justify-content : center;
	position : relative;
	width : ${p => p.$w}px;
	height : 15px;
	background : #f0f0f0;
	border : 1px solid;
	border-color : #fff #777 #777 #fff;
	svg { position : absolute; left : 1px; }
`

const Solids = styled(Push)`
	background : #e8df55;
	border : 2px solid #58e6e0;
`

const Action = styled(Push)`
	width : ${p => p.$w || 92}px;
	background : ${p => p.$red ? '#c15b5f' : '#5abd5d'};
	border-color : ${p => p.$focus ? '#12481a' : p.$red ? '#d88 #733 #733 #d88' : '#8d8 #2d6d30 #2d6d30 #8d8'};
	border-width : ${p => p.$focus ? 2 : 1}px;
`

const Value = styled.input`
	width : 115px;
	height : 15px;
	padding-right : 2px;
	text-align : right;
	background : #fff;
	border : 1px solid;
	border-color : #777 #fff #fff #777;
	font-family : "Liberation Mono", monospace;
	outline : 0;
`

/* ---------- status ---------- */

const Status = styled.footer`
	display : flex;
	align-items : flex-end;
	height : 17px;
	p {
		flex : 1;
		margin : 0 0 2px 2px;
		font-family : "Liberation Sans", sans-serif;
		font-size : 8px;
	}
`

const Cell = styled.span`
	display : flex;
	align-items : center;
	gap : 3px;
	width : ${p => p.$w}px;
	height : 14px;
	padding-left : ${p => p.$mark ? 4 : 1}px;
	border : 0 solid #555;
	border-width : 2px 0 0 2px;
	&::before {
		content : ${p => p.$mark ? '""' : 'none'};
		width : 5px;
		height : 5px;
		background : ${p => p.$mark};
	}
`

const Ink = styled.svg`
	position : absolute;
	top : 0;
	left : 0;
	pointer-events : none;
`

/* ---------- data ---------- */

const menus = ['File', 'Edit', 'View', 'Collectors', 'Geometry', 'Mesh', 'Connectors', 'Materials', 'Properties', 'BCs', 'Setup', 'Tools', 'Morphing', 'Optimization', 'Post', 'XYPlots', 'Preferences', 'Applications', 'Help'];

// '|' is a grip, '/' a separator, '!' pressed, a trailing '+' adds a caret and '-' a dimmed one
const bars = {
	main: '| fresh+ open+ save+ bring+ send+ ppt+ / user profile+ | pageAdd pageDel frame+ frameA frameB turn | fit back xy yx zx xz zy yz iso views ghost- | zoomBox zoomRing pan hand horiz vert spin | undoOff- redoOff- | cut copy+ paste- wipe-',
	second: '| nodes rod mass cubeRed cubeX cubeTop meshOut meshFlip meshOk / sum sumLoad calc | camSave camWin camBar camDash camFrame vidWin vidDash',
	folders: '!fGrey fLink fBlue fMat fProp fRefs fStack',
	side: 'vMask vDown vHalf vFull vWire vCircle find numbers !measure !meshAbc !loadAbc loads !shade',
	lower: '| gMesh+ | yCubes yBlue yMat yProp yLoad ySys+ / remove stack organize renum |',
	nav: '| meshFour+ wrench / left right curl / minus plus curl',
	shapes: 'surfLine+ surf+ solid /',
	display: 'wireCube+ fillCube+ line+ shell+ slab+ shrink screen | star',
};

const groupsTop = [['Assembly Hierarchy', 'yCubes'], ['Cards (2)', 'yCard'], ['Components (14)', 'yBlue', true]];
const groupsEnd = [['Laminates (3)', 'yBall'], ['Load Collectors (2)', 'yLoad'], ['Load Steps (1)', 'yStep'], ['Materials (6)', 'yMat'], ['Plies (31)', 'yPly'], ['Properties (7)', 'yProp'], ['Sets (31)', 'yGreen']];

const components = [
	{ id: 1, name: 'VOLUME PALA ZONA POSTERIORE', color: '#f2ee1c' },
	{ id: 2, name: 'VOLUME PALA ZONA CENTRALE', color: '#a48cf0', el: true },
	{ id: 3, name: 'VOLUME ATTACCO A', color: '#ee1616' },
	{ id: 4, name: 'VOLUME TIP B', color: '#7c3d80', el: true, current: true },
	{ id: 5, name: 'VOLUME TIP A', color: '#14e628', geo: true },
	{ id: 6, name: 'VOLUME PALA ZONA ANTERIORE A', color: '#e8a022', el: true },
	{ id: 7, name: 'VOLUME PALA ZONA ANTERIORE B', color: '#1818e6' },
	{ id: 8, name: 'VOLUME ATTACCO ZONA FORI A', color: '#fff' },
	{ id: 9, name: 'VOLUME ATTACCO ZONA FORI B', color: '#e8a022' },
	{ id: 10, name: 'VOLUME ATTACCO B', color: '#999' },
	{ id: 11, name: 'VOLUME ATTACCO D', color: '#999' },
	{ id: 12, name: 'VOLUME ATTACCO C', color: '#fff' },
	{ id: 14, name: '2D PALA ZONA POSTERIORE', color: '#e63a32' },
	{ id: 16, name: '2D PALA ZONA ANTERIORE B', color: '#14e628', el: true },
];

const meshModes = ['Tetra mesh', 'Tetra remesh', 'Volume tetra', 'Tetramesh parameters', 'Refinement box'];

/* ---------- components ---------- */

const Tools = ({ items, inset }) => items.split(' ').map((item, i) => {
	if (item === '|') return <Grip key={i} $in={inset} />;
	if (item === '/') return <Sep key={i} />;
	const name = item.replace(/[!+-]/g, '');
	const wide = /[+-]$/.test(item);
	return (
		<Tool key={i} type="button" aria-label={name} $wide={wide} $on={item.startsWith('!')}>
			<Icon name={name} />
			{wide && <Caret $dim={item.endsWith('-')} />}
		</Tool>
	);
});

const Group = ({ label, icon, open }) => (
	<tr>
		<td>
			<Item><Expander aria-label={label} $open={open} /><Icon name={icon} size={15} /><Name>{label}</Name></Item>
		</td>
		<td /><td /><td />
	</tr>
);

const Component = ({ item }) => (
	<tr>
		<td>
			<Item $leaf $bold={item.current}>
				<Branch />
				<Icon name={item.geo ? 'geoOn' : 'geoOff'} size={14} />
				<Icon name={item.el ? 'elOn' : 'elOff'} size={14} />
				<Name $gap={3}>{item.name}</Name>
			</Item>
		</td>
		<Num $bold={item.current}>{item.id}</Num>
		<td><Swatch $c={item.color} /></td>
		<Num $center $bold={item.current}>0</Num>
	</tr>
);

const Chevron = ({ up, twice }) => (
	<svg width="8" height="8" viewBox="0 0 8 8" fill="none" stroke="#444" strokeWidth="1.200">
		<path d={up ? 'M1 5.500l3-3 3 3' : twice ? 'M1.500 1l2.500 2.500L6.500 1M1.500 4.500L4 7l2.500-2.500' : 'M1 2.500l3 3 3-3'} />
	</svg>
);

const UpDown = () => (
	<svg width="21" height="13" viewBox="0 0 21 13"><path d="M7.500 5.500l3-4 3 4zM7.500 7.500l3 4 3-4z" fill="#111" /></svg>
);

const ModelBrowser = () => (
	<Browser>
		<Tabs>
			<Tab $start={5} $end={14}>Session</Tab>
			<Tab $end={13}>Mask</Tab>
			<Tab $active>Model <span>✕</span></Tab>
			<Tab $end={13}>Entity State</Tab>
		</Tabs>
		<Toolbar $pad={2}><Tools items={bars.folders} /></Toolbar>
		<Search>
			<SearchBox>
				<input placeholder="Enter Search String..." aria-label="Search" />
				<Icon name="lens" size={15} />
				<Chevron />
			</SearchBox>
			<Chevron twice />
		</Search>
		<Toolbar $h={24} $pad={3}>
			<Tools items="patch+" />
			<Spacer $w={8} />
			<Tools items="eyePlus eyeMinus eyeFlip" />
			<Spacer />
			<Tools items="block+ patch+ cursor addTo eyeAll eyeOne" />
		</Toolbar>
		<TreeArea>
			<TreeTable>
				<colgroup><Col /><Col $w={19} /><Col $w={19} /><Col $w={71} /></colgroup>
				<thead>
					<tr><th>Entities</th><th>ID</th><th><Icon name="wheel" size={13} /></th><th>Include</th></tr>
				</thead>
				<tbody>
					{groupsTop.map(g => <Group key={g[0]} label={g[0]} icon={g[1]} open={g[2]} />)}
					{components.map(c => <Component key={c.id} item={c} />)}
					{groupsEnd.map(g => <Group key={g[0]} label={g[0]} icon={g[1]} />)}
				</tbody>
			</TreeTable>
			<Scroll><Chevron up /><Thumb /><Chevron /></Scroll>
		</TreeArea>
		<Splitter><svg width="9" height="5"><path d="M0 0h9L4.500 5z" fill="#222" /></svg></Splitter>
		<Detail>
			<colgroup><Col $w={28} /><Col /></colgroup>
			<thead><tr><th>Name</th><th>Value</th></tr></thead>
			<tbody><tr><td /><td /></tr></tbody>
		</Detail>
	</Browser>
);

const Graphics = () => (
	<View>
		<Scene viewBox="367 99 809 335" preserveAspectRatio="none">
			<path d="M662 187l11-3-28 214-15 5z" fill="#b07d18" />
			<path d="M662 187l-32 215" stroke="#3c9a1c" strokeWidth="2" />
			<path d="M672 185l8-1-33 210-7-1z" fill="#8a63c4" />
			<path d="M679 182l3 3-33 211-3-2z" fill="#5f4494" />
			<path d="M640 392l6 1-1 6-15 4 2-8z" fill="#b8862c" />
			<path d="M629 403l4-1" stroke="#33a82a" strokeWidth="2" />
			<path d="M664 184l8-10 12-12 15-13-12 17-9 12z" fill="#692a58" />
			<g fill="none" stroke="#fff" strokeWidth="2" strokeLinejoin="round">
				<path d="M673 180Q679 165 706 149L726 142 717 156V161L722 164 682 186" />
				<path d="M675 180Q690 160 708 148l17-7" />
				<path d="M674 183l45-21M677 184l42-19M680 180l40-16" strokeWidth="1.500" />
				<path d="M662 190l2-5M672 177l4 6M720 160v7" strokeWidth="3" />
			</g>
			<path d="M684 172Q694 161 703 152" stroke="#692a58" strokeWidth="3" fill="none" />
			<path d="M392 421l-15-23" stroke="#3434b8" strokeWidth="1.500" />
			<path d="M376 397l8 7-3 3z" fill="#2020c8" stroke="#2020c8" strokeWidth="2" />
			<path d="M392 421l25-13" stroke="#d43434" strokeWidth="1.500" />
			<path d="M417 408l-9 2 2 4z" fill="#dc2020" stroke="#dc2020" strokeWidth="2" />
			<path d="M392 420l2-7" stroke="#38d838" strokeWidth="4" />
			<g fontSize="10" fill="#e4e4e4">
				<text x="373" y="392">Z</text>
				<text x="393" y="410">Y</text>
				<text x="421" y="404">X</text>
			</g>
			<text x="1081" y="432" fontSize="8" fontWeight="700" fill="#444">400</text>
			<path d="M1098 427v5h73v-5" fill="none" stroke="#333" strokeWidth="1.500" />
		</Scene>
		<ModelInfo>{'Model Info: C:\\Users\\mirko\\Desktop\\Nuova cartella (2)\\STEP4\\FILE STARTER.hm*'}</ModelInfo>
	</View>
);

const TetraPanel = () => {
	const [mode, setMode] = useState('Volume tetra');

	return (
		<Panel onSubmit={e => e.preventDefault()}>
			<Rows>
				{meshModes.map(m =>
					<Choice key={m}>
						<Radio type="radio" name="mode" checked={mode === m} onChange={() => setMode(m)} />{m}
					</Choice>
				)}
			</Rows>
			<Rows>
				<Line $in={23}>Enclosed volume:</Line>
				<Line $in={23}>
					<Push type="button" $w={22} aria-label="Entity type"><Caret $big /></Push>
					<Solids type="button" $w={140}>solids</Solids>
					<Push type="button" $w={22} aria-label="Reset"><svg width="19" height="13"><path d="M6 2h2v9H6zM14 2v9L8.500 6.500z" fill="#111" /></svg></Push>
				</Line>
				<Line $in={30}><Choice><Check type="checkbox" />match existing mesh</Choice></Line>
				<span />
				{[['2D type:', 'mixed'], ['3D type:', 'tetras'], ['element order:', 'first']].map(([label, value]) =>
					<Line key={label}>
						<Text $w={81} $pr={17}>{label}</Text>
						<Push type="button" $w={23} aria-label={label}>{value === 'first' ? <UpDown /> : <Caret $big />}</Push>
						<Push type="button" $w={128}>
							{value === 'mixed' && <svg width="16" height="11"><path d="M1.500 1.500h7v8h-7zM8.500 1.500h2l5 4-5 4h-2" fill="none" stroke="#555" /></svg>}
							{value}
						</Push>
					</Line>
				)}
			</Rows>
			<Rows>
				<Line $in={7}><Choice><Check type="checkbox" defaultChecked />Use curvature</Choice></Line>
				<Line $in={7}><Choice><Check type="checkbox" defaultChecked />Use proximity</Choice></Line>
				<Choice as="div"><Text as="label" htmlFor="minSize" $w={132}>Min elem size:</Text><Value id="minSize" defaultValue="2 . 0 0 0" /></Choice>
				<Choice as="div"><Text as="label" htmlFor="angle" $w={132}>Feature angle:</Text><Value id="angle" defaultValue="3 0 . 0 0 0" /></Choice>
				<Choice as="div"><Text as="label" htmlFor="size" $w={63}>Element size:</Text><Value id="size" defaultValue="4 . 0 0 0" /></Choice>
				<Line $in={7}><Choice><Check type="checkbox" defaultChecked />Cleanup elements</Choice></Line>
				<Line>
					<Push type="button" $w={23} aria-label="Toggle destination"><UpDown /></Push>
					<Push type="button" $w={163}>Elems to Current Comp</Push>
				</Line>
			</Rows>
			<Rows>
				<Action type="submit" $focus>mesh</Action>
				<Action type="button">reject</Action>
				<Action type="button">mesh to file</Action>
				<span /><span /><span />
				<Line $right><Action type="button" $red $w={69}>return</Action></Line>
			</Rows>
		</Panel>
	);
};

const App = () => {
	return (
		<Page>
			<GlobalStyle />
			<TitleBar>
				<Icon name="logo" size={13} />
				<TitleText>Untitled - HyperWorks 2017.2 - OptiStruct (Non risponde)</TitleText>
				<WinButton aria-label="Minimize"><svg width="8" height="2"><path d="M0 1h7" stroke="#aaa" /></svg></WinButton>
				<WinButton aria-label="Restore"><svg width="8" height="8"><path d="M.5 2.500h5v5h-5zM2.500 2V.5h5v5H6" fill="none" stroke="#eee" /></svg></WinButton>
				<WinButton $close aria-label="Close"><svg width="8" height="8"><path d="M1 1l6 6M7 1L1 7" stroke="#fbc6ca" /></svg></WinButton>
			</TitleBar>
			<Frame>
				<MenuBar>{menus.map(m => <button key={m}>{m}</button>)}</MenuBar>
				<Toolbar $pad={2}>
					<Tools items={bars.main} />
					<Spacer />
					<Tools items="prev next" />
					<PageBox><input defaultValue="1" aria-label="Page" />of 1</PageBox>
				</Toolbar>
				<Toolbar $pad={2}><Tools items={bars.second} /></Toolbar>
				<Body>
					<ModelBrowser />
					<Work>
						<Stage>
							<SideBar><SideGrip /><Tools items={bars.side} /></SideBar>
							<Graphics />
						</Stage>
						<Toolbar>
							<Tools items={bars.lower} inset={5} />
							<Combo $w={46}>
								<Icon name="palette" size={17} />
								<select aria-label="Geometry color"><option>Auto</option></select>
								<ComboEnd><Caret /></ComboEnd>
							</Combo>
							<Tools items={bars.shapes} />
							<Combo $w={54}>
								<Icon name="compCube" size={17} />
								<select aria-label="Element color"><option>By Comp</option></select>
								<ComboEnd><Caret /></ComboEnd>
							</Combo>
							<Tools items={bars.display} />
						</Toolbar>
						<Toolbar $h={24}><Tools items={bars.nav} inset={5} /></Toolbar>
						<TetraPanel />
					</Work>
				</Body>
				<Status>
					<p>tetra meshing(2/3):insert field nodes, elems=101407,nodes=23369, (36.05 percent done)</p>
					<Cell $w={73} />
					<Cell $w={75}>Model</Cell>
					<Cell $w={86} $mark="#5c3f66">VOLUME TIP B</Cell>
					<Cell $w={84} $mark="#442c38">PRESSURE</Cell>
				</Status>
			</Frame>
			<Ink width="800" height="640" viewBox="0 0 800 640" fill="none" stroke="#000" strokeWidth="3" strokeLinecap="round" strokeLinejoin="round">
				<path d="M229 21l1 32 3 21M217 34l11-20 18 12-28 2" />
				<path d="M258 561l-3 44M246 604l25 6M238 601l13 12h16" strokeWidth="2" />
				<path d="M760 527l-9 16-11 8M726 549l14 2-13 11z" />
			</Ink>
		</Page>
	);
};

export default App;
